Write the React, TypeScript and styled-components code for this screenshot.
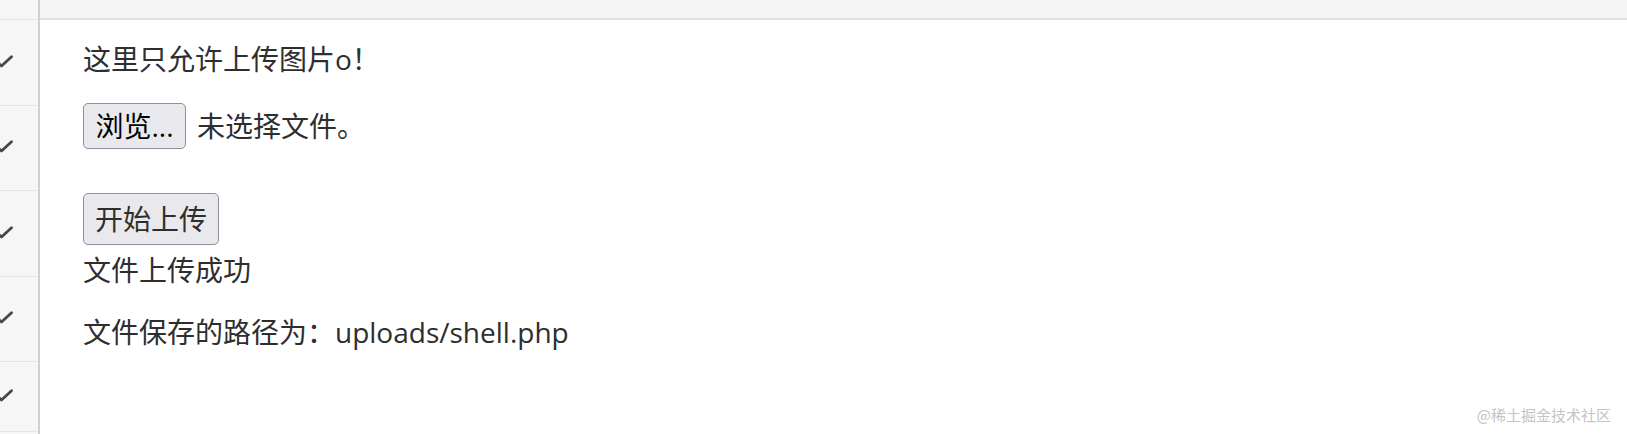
import React from "react";
import styled, { createGlobalStyle } from "styled-components";

const Global = createGlobalStyle`
  html, body { margin: 0; padding: 0; background: #ffffff; }
  body { width: 1627px; height: 434px; overflow: hidden; }
`;

const Page = styled.div`
  position: relative;
  display: flex;
  width: 1627px;
  height: 434px;
  overflow: hidden;
  font-family: "Open Sans", "Noto Sans CJK SC", sans-serif;
  color: #2e2e2e;
`;

const Gutter = styled.div`
  width: 38px;
  flex: none;
  background: #f6f6f6;
  border-right: 2px solid #d0d0d0;
  display: flex;
  flex-direction: column;
`;

const GutterHead = styled.div`
  height: 19px;
  flex: none;
  border-bottom: 1px solid #e4e4e4;
`;

const GutterRow = styled.div<{ $h: number }>`
  height: ${(p) => p.$h}px;
  flex: none;
  border-bottom: 1px solid #e6e6e6;
  display: flex;
  align-items: center;
  overflow: hidden;
`;

const Check = styled.svg`
  width: 17px;
  height: 13px;
  margin-left: -4px;
  margin-top: -3px;
  flex: none;
`;

const Main = styled.div`
  flex: 1;
  display: flex;
  flex-direction: column;
`;

const TopBar = styled.div`
  height: 18px;
  background: #f5f5f5;
  border-bottom: 2px solid #e0e0e0;
  flex: none;
`;

const Content = styled.div`
  padding-left: 43px;
  display: flex;
  flex-direction: column;
  align-items: flex-start;
  font-size: 28px;
`;

const Line = styled.div<{ $mt: number }>`
  margin-top: ${(p) => p.$mt}px;
  height: 40px;
  line-height: 40px;
  white-space: nowrap;
`;

const FileRow = styled.div<{ $mt: number }>`
  margin-top: ${(p) => p.$mt}px;
  display: flex;
  align-items: center;
  gap: 11px;
`;

const Button = styled.button<{ $w: number; $h: number; $mt: number; $color: string }>`
  box-sizing: border-box;
  width: ${(p) => p.$w}px;
  height: ${(p) => p.$h}px;
  margin-top: ${(p) => p.$mt}px;
  padding: 0;
  font-family: "Open Sans", "Noto Sans CJK SC", sans-serif;
  font-size: 28px;
  line-height: 1;
  color: ${(p) => p.$color};
  background: #e9e9ed;
  border: 1.5px solid #8f8f9d;
  border-radius: 5px;
  display: flex;
  align-items: center;
  justify-content: center;
`;

const FileLabel = styled.span`
  line-height: 40px;
  white-space: nowrap;
`;

const Watermark = styled.div`
  position: absolute;
  right: 16px;
  top: 403px;
  font-family: "Noto Sans CJK SC", sans-serif;
  font-size: 15px;
  line-height: 24px;
  color: #c4c4c4;
  white-space: nowrap;
`;

const rows = [86, 85, 86, 85, 70];

const CheckIcon = () => (
  <Check viewBox="0 0 17 13">
    <path d="M1 7 L5.5 11 L15.5 1.8" fill="none" stroke="#474747" strokeWidth="2.8" strokeLinecap="round" strokeLinejoin="round" />
  </Check>
);

export default function App() {
  return (
    <>
      <Global />
      <Page>
        <Gutter>
          <GutterHead />
          {rows.map((h, i) => (
            <GutterRow key={i} $h={h - 1}>
              <CheckIcon />
            </GutterRow>
          ))}
        </Gutter>
        <Main>
          <TopBar />
          <Content>
            <Line $mt={19}>这里只允许上传图片o！</Line>
            <FileRow $mt={24}>
              <Button $w={103} $h={46} $mt={0} $color="#000000">浏览...</Button>
              <FileLabel>未选择文件。</FileLabel>
            </FileRow>
            <Button $w={136} $h={52} $mt={44} $color="#2e2e2e">开始上传</Button>
            <Line $mt={5}>文件上传成功</Line>
            <Line $mt={22}>文件保存的路径为：uploads/shell.php</Line>
          </Content>
        </Main>
        <Watermark>@稀土掘金技术社区</Watermark>
      </Page>
    </>
  );
}
